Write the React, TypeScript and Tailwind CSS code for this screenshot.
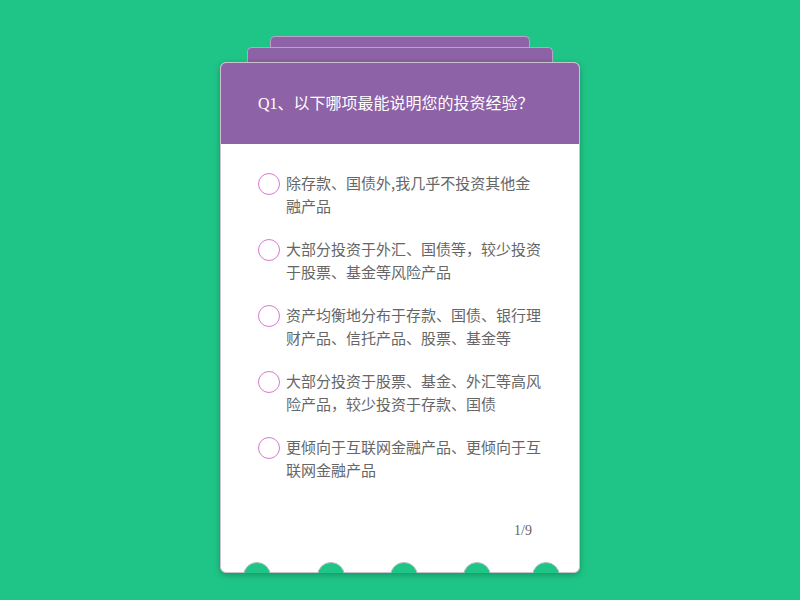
import React from 'react';

const options = [
  '除存款、国债外,我几乎不投资其他金融产品',
  '大部分投资于外汇、国债等，较少投资于股票、基金等风险产品',
  '资产均衡地分布于存款、国债、银行理财产品、信托产品、股票、基金等',
  '大部分投资于股票、基金、外汇等高风险产品，较少投资于存款、国债',
  '更倾向于互联网金融产品、更倾向于互联网金融产品',
];

const notches = [257, 331, 404, 477, 546];

export default function App() {
  return (
    <div
      className="w-[800px] h-[600px] bg-[#1fc587] flex flex-col items-center overflow-hidden"
      style={{ fontFamily: '"Liberation Serif", "Noto Sans CJK SC", serif' }}
    >
      <div className="mt-[36px] w-[260px] h-[11px] bg-[#8e62a6] rounded-t-[5px] border border-b-0 border-[#b9a3c9]" />
      <div className="w-[306px] h-[15px] bg-[#8e62a6] rounded-t-[5px] border border-b-0 border-[#b9a3c9]" />
      <div className="relative w-[360px] h-[511px] bg-white rounded-[6px] border border-[#c9c3cf] shadow-[0_2px_6px_rgba(0,0,0,0.25)] flex flex-col">
        <div className="h-[81px] bg-[#8e62a6] rounded-t-[5px] flex items-center pl-[37px] text-white text-[16px]">
          Q1、以下哪项最能说明您的投资经验？
        </div>
        <div className="flex flex-col gap-[20px] pt-[27px] pl-[37px] pr-[30px]">
          {options.map((o) => (
            <div key={o} className="flex items-start gap-[6px]">
              <div className="mt-[2px] w-[22px] h-[22px] shrink-0 rounded-full border border-[#d77ad0]" />
              <div
                className="w-[256px] text-[15px] leading-[23px] text-[#666666]"
                style={{ fontFamily: '"Noto Sans CJK SC", sans-serif' }}
              >
                {o}
              </div>
            </div>
          ))}
        </div>
        <div className="mt-auto mb-[31px] pr-[47px] text-right text-[14px] text-[#666666]">1/9</div>
        <div className="absolute left-[-1px] right-[-1px] bottom-[-1px] h-[11px] overflow-hidden">
          {notches.map((x) => (
            <div
              key={x}
              className="absolute top-0 w-[28px] h-[28px] rounded-full bg-[#1fc587] border border-[#b8bcbd]"
              style={{ left: x - 220 - 14 }}
            />
          ))}
        </div>
      </div>
    </div>
  );
}
